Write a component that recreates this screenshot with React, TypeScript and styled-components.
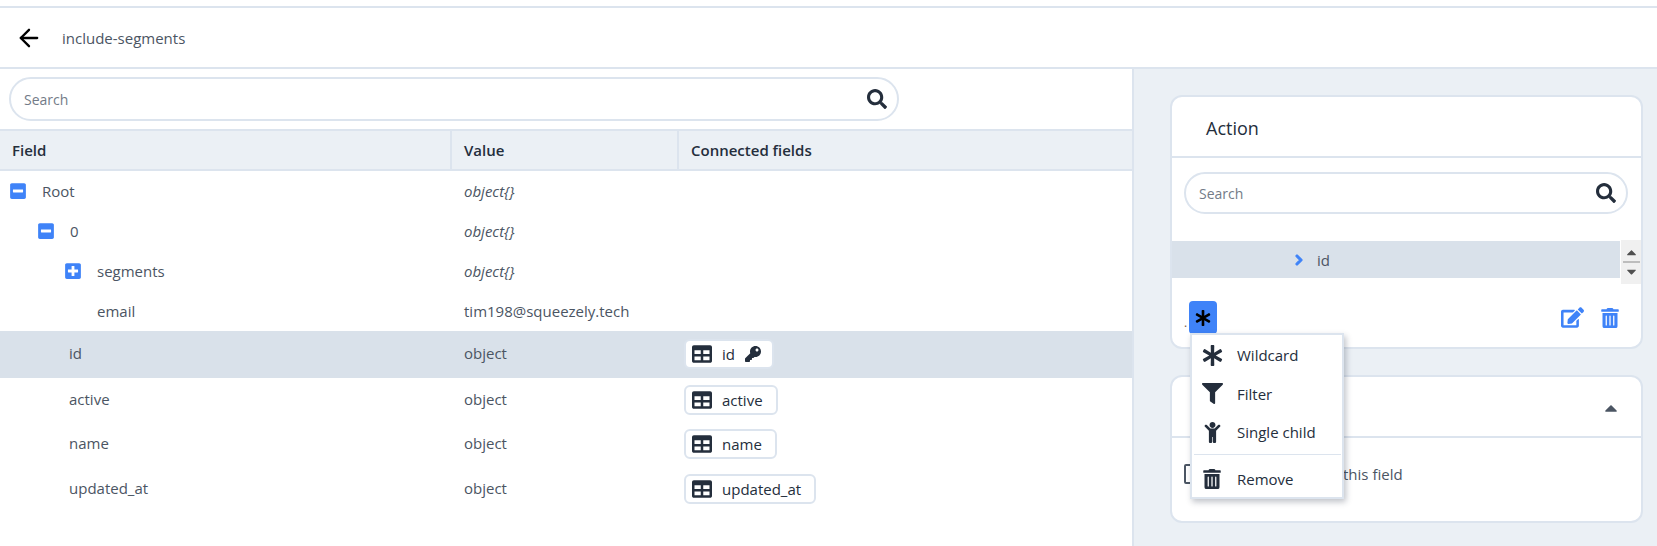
import React from 'react';
import styled, { createGlobalStyle } from 'styled-components';
import { ArrowLeft } from 'lucide-react';
import {
  FaAsterisk,
  FaCaretDown,
  FaCaretUp,
  FaChevronRight,
  FaChild,
  FaEdit,
  FaFilter,
  FaKey,
  FaMinusSquare,
  FaPlusSquare,
  FaSearch,
  FaTable,
  FaTrashAlt,
} from 'react-icons/fa';

const BLUE = '#3f83f8';
const INK = '#242e3c';
const LINE = '#dce4ee';

const GlobalStyle = createGlobalStyle`
  html, body { margin: 0; padding: 0; background: #fff; overflow: hidden; }
  body { font-family: "Open Sans", "Noto Sans", sans-serif; font-size: 15px; color: #4b5563; }
`;

const Page = styled.div`
  width: 1657px;
  height: 546px;
  padding-top: 6px;
  box-sizing: border-box;
  display: flex;
  flex-direction: column;
`;

const TopBar = styled.header`
  height: 59px;
  flex: none;
  display: flex;
  align-items: center;
  border-top: 2px solid ${LINE};
  border-bottom: 2px solid ${LINE};
  padding-left: 15px;
  gap: 19px;
  color: #000;
`;

const TopTitle = styled.span`
  color: #4b5563;
  margin-top: 1px;
`;

const Main = styled.div`
  flex: 1;
  display: flex;
  min-height: 0;
`;

const LeftPanel = styled.section`
  width: 1134px;
  flex: none;
  box-sizing: border-box;
  border-right: 2px solid ${LINE};
`;

const SearchWrap = styled.div`
  padding: 8px 9px;
  width: 908px;
  box-sizing: border-box;
`;

const SearchBox = styled.div<{ $h: number }>`
  height: ${p => p.$h}px;
  box-sizing: border-box;
  border: 2px solid ${LINE};
  border-radius: ${p => p.$h / 2}px;
  display: flex;
  align-items: center;
  justify-content: space-between;
  padding: 0 10px 0 13px;
  color: #737b87;
  font-size: 14px;
  background: #fff;
  svg { color: ${INK}; }
`;

const Columns = '450px 227px 1fr';

const HeadRow = styled.div`
  display: grid;
  grid-template-columns: ${Columns};
  height: 42px;
  box-sizing: border-box;
  background: #ebf0f5;
  border-top: 2px solid ${LINE};
  border-bottom: 2px solid ${LINE};
`;

const HeadCell = styled.div<{ $first?: boolean }>`
  display: flex;
  align-items: center;
  padding-left: 12px;
  font-weight: 600;
  color: ${INK};
  border-left: ${p => (p.$first ? 'none' : `2px solid ${LINE}`)};
`;

const Row = styled.div<{ $h: number; $selected?: boolean }>`
  display: grid;
  grid-template-columns: ${Columns};
  height: ${p => p.$h}px;
  align-items: center;
  background: ${p => (p.$selected ? '#d9e1ea' : 'transparent')};
`;

const FieldCell = styled.div<{ $indent: number; $raised?: boolean }>`
  display: flex;
  align-items: center;
  padding-left: ${p => p.$indent}px;
  padding-bottom: ${p => (p.$raised ? 3 : 0)}px;
  color: #4b5563;
`;

const Toggle = styled.span`
  width: 16px;
  height: 18px;
  color: ${BLUE};
  display: flex;
  align-items: center;
  margin-right: 16px;
`;

const ValueCell = styled.div<{ $italic?: boolean; $raised?: boolean }>`
  padding-left: 12px;
  margin-left: 2px;
  padding-bottom: ${p => (p.$raised ? 3 : 0)}px;
  font-style: ${p => (p.$italic ? 'italic' : 'normal')};
  color: #4b5563;
`;

const LinkCell = styled.div`
  padding-left: 7px;
  padding-bottom: 1px;
  display: flex;
`;

const Pill = styled.span`
  display: inline-flex;
  align-items: center;
  height: 30px;
  box-sizing: border-box;
  background: #fff;
  border: 2px solid ${LINE};
  border-radius: 6px;
  padding: 0 13px 0 6px;
  gap: 10px;
  font-weight: 500;
  color: ${INK};
  svg { color: ${INK}; flex: none; }
`;

const KeyMark = styled(FaKey)`
  margin-right: -2px;
`;

const RightPanel = styled.aside`
  flex: 1;
  background: #ebf0f5;
  padding: 26px 14px 0 36px;
  display: flex;
  flex-direction: column;
  gap: 26px;
  position: relative;
`;

const Card = styled.div<{ $h: number }>`
  height: ${p => p.$h}px;
  flex: none;
  box-sizing: border-box;
  background: #fff;
  border: 2px solid ${LINE};
  border-radius: 12px;
`;

const CardHead = styled.div`
  height: 61px;
  box-sizing: border-box;
  border-bottom: 2px solid ${LINE};
  display: flex;
  align-items: center;
  justify-content: space-between;
  padding: 3px 20px 0 34px;
  font-size: 18px;
  font-weight: 500;
  color: ${INK};
  svg { color: #4b5563; }
`;

const CardSearch = styled.div`
  padding: 14px 13px 0 12px;
`;

const TreeLine = styled.div`
  margin-top: 26px;
  display: flex;
  align-items: flex-start;
`;

const TreeRow = styled.div`
  width: 448px;
  height: 37px;
  margin-top: 1px;
  background: #d9e1ea;
  display: flex;
  align-items: center;
  padding-left: 121px;
  box-sizing: border-box;
  gap: 12px;
  color: #4b5563;
  svg { color: ${BLUE}; stroke: ${BLUE}; stroke-width: 50px; }
`;

const Spinner = styled.div`
  width: 20px;
  height: 44px;
  margin-left: 1px;
  background: #f0f0f0;
  display: flex;
  flex-direction: column;
  align-items: center;
  justify-content: center;
  color: #505050;
`;

const SpinDivider = styled.div`
  width: 17px;
  height: 2px;
  background: #bdbdbd;
  margin: 1px 0;
`;

const ActionRow = styled.div`
  margin-top: 17px;
  display: flex;
  align-items: center;
  padding: 0 21px 0 12px;
  height: 33px;
`;

const Dot = styled.span`
  color: #7a5a44;
  font-size: 12px;
  line-height: 1;
  width: 5px;
  align-self: flex-end;
  margin-bottom: 5px;
`;

const StarButton = styled.span`
  width: 28px;
  height: 33px;
  background: ${BLUE};
  border-radius: 4px;
  color: #000;
  display: flex;
  align-items: center;
  justify-content: center;
`;

const ActionIcons = styled.span`
  margin-left: auto;
  display: flex;
  align-items: center;
  gap: 16px;
  color: ${BLUE};
`;

const FieldNote = styled.div`
  display: flex;
  align-items: center;
  height: 72px;
  padding: 0 0 0 12px;
  color: #4b5563;
`;

const NoteBox = styled.span`
  width: 14px;
  height: 20px;
  box-sizing: border-box;
  border: 2px solid #4b5563;
  border-radius: 2px;
  margin-right: 145px;
`;

const Menu = styled.div`
  position: absolute;
  left: 56px;
  top: 264px;
  width: 154px;
  height: 166px;
  box-sizing: border-box;
  background: #fff;
  border: 2px solid ${LINE};
  box-shadow: 2px 3px 6px rgba(30, 40, 60, 0.28);
  padding-top: 1px;
`;

const MenuItem = styled.div`
  height: 38.5px;
  display: flex;
  align-items: center;
  color: ${INK};
  svg { flex: none; }
`;

const MenuIcon = styled.span`
  width: 45px;
  display: flex;
  justify-content: center;
  padding-right: 5px;
  box-sizing: border-box;
`;

const MenuDivider = styled.div`
  height: 1px;
  background: ${LINE};
  margin: 2px 1px 5px 2px;
`;

type Field = { name: string; value: string; indent: number; toggle?: 'minus' | 'plus'; h: number; italic?: boolean; link?: string; selected?: boolean };

const fields: Field[] = [
  { name: 'Root', value: 'object{}', indent: 10, toggle: 'minus', h: 40, italic: true },
  { name: '0', value: 'object{}', indent: 38, toggle: 'minus', h: 40, italic: true },
  { name: 'segments', value: 'object{}', indent: 65, toggle: 'plus', h: 40, italic: true },
  { name: 'email', value: 'tim198@squeezely.tech', indent: 97, h: 40 },
  { name: 'id', value: 'object', indent: 69, h: 47, link: 'id', selected: true },
  { name: 'active', value: 'object', indent: 69, h: 44, link: 'active' },
  { name: 'name', value: 'object', indent: 69, h: 45, link: 'name' },
  { name: 'updated_at', value: 'object', indent: 69, h: 45, link: 'updated_at' },
];

const App = () => (
  <Page>
    <GlobalStyle />
    <TopBar>
      <ArrowLeft size={28} strokeWidth={2} />
      <TopTitle>include-segments</TopTitle>
    </TopBar>
    <Main>
      <LeftPanel>
        <SearchWrap>
          <SearchBox $h={44}>
            Search
            <FaSearch size={20} />
          </SearchBox>
        </SearchWrap>
        <HeadRow>
          <HeadCell $first>Field</HeadCell>
          <HeadCell>Value</HeadCell>
          <HeadCell>Connected fields</HeadCell>
        </HeadRow>
        {fields.map(f => (
          <Row key={f.name} $h={f.h} $selected={f.selected}>
            <FieldCell $indent={f.indent} $raised={!!f.link}>
              {f.toggle && (
                <Toggle>{f.toggle === 'minus' ? <FaMinusSquare size={18} /> : <FaPlusSquare size={18} />}</Toggle>
              )}
              {f.name}
            </FieldCell>
            <ValueCell $italic={f.italic} $raised={!!f.link}>{f.value}</ValueCell>
            <LinkCell>
              {f.link && (
                <Pill>
                  <FaTable size={20} />
                  {f.link}
                  {f.selected && <KeyMark size={16} />}
                </Pill>
              )}
            </LinkCell>
          </Row>
        ))}
      </LeftPanel>
      <RightPanel>
        <Card $h={254}>
          <CardHead>Action</CardHead>
          <CardSearch>
            <SearchBox $h={42}>
              Search
              <FaSearch size={20} />
            </SearchBox>
          </CardSearch>
          <TreeLine>
            <TreeRow>
              <FaChevronRight size={12} />
              id
            </TreeRow>
            <Spinner>
              <FaCaretUp size={15} />
              <SpinDivider />
              <FaCaretDown size={15} />
            </Spinner>
          </TreeLine>
          <ActionRow>
            <Dot>.</Dot>
            <StarButton>
              <FaAsterisk size={16} />
            </StarButton>
            <ActionIcons>
              <FaEdit size={23} />
              <FaTrashAlt size={20} />
            </ActionIcons>
          </ActionRow>
        </Card>
        <Card $h={148}>
          <CardHead>
            <span />
            <FaCaretUp size={20} />
          </CardHead>
          <FieldNote>
            <NoteBox />
            this field
          </FieldNote>
        </Card>
        <Menu>
          <MenuItem>
            <MenuIcon><FaAsterisk size={21} /></MenuIcon>
            Wildcard
          </MenuItem>
          <MenuItem>
            <MenuIcon><FaFilter size={21} /></MenuIcon>
            Filter
          </MenuItem>
          <MenuItem>
            <MenuIcon><FaChild size={21} /></MenuIcon>
            Single child
          </MenuItem>
          <MenuDivider />
          <MenuItem>
            <MenuIcon><FaTrashAlt size={20} /></MenuIcon>
            Remove
          </MenuItem>
        </Menu>
      </RightPanel>
    </Main>
  </Page>
);

export default App;
